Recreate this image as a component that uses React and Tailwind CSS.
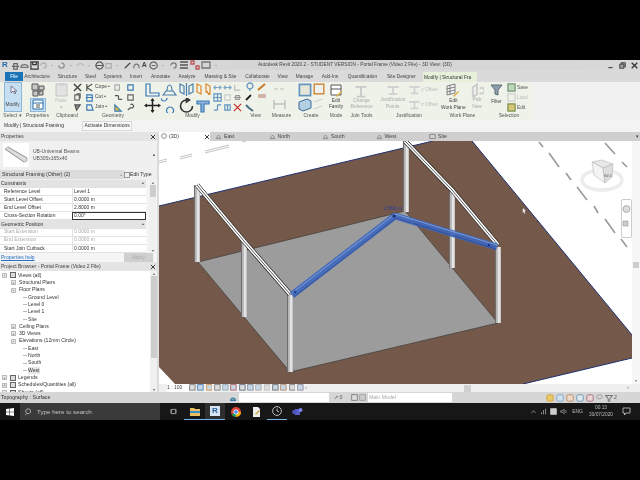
import React from "react";

const font = { fontFamily: '"Liberation Sans", Arial, sans-serif' };

const Box = ({ c = "#3a78b5", f = "none", s = 9, r = 0 }) => (
  <svg width={s} height={s} viewBox="0 0 10 10" className="shrink-0">
    <rect x="1" y="1" width="8" height="8" rx={r} fill={f} stroke={c} strokeWidth="1.2" />
  </svg>
);
const P = ({ d, c = "#444", f = "none", s = 9, w = 1.3 }) => (
  <svg width={s} height={s} viewBox="0 0 10 10" className="shrink-0">
    <path d={d} stroke={c} fill={f} strokeWidth={w} />
  </svg>
);

const Big = ({ d, c = "#3a78b5", f = "none", w = 1.2 }) => (
  <svg width="17" height="15" viewBox="0 0 17 15" className="shrink-0">
    <path d={d} stroke={c} fill={f} strokeWidth={w} />
  </svg>
);

function Qat() {
  const items = [
    ["M1 6h8M3 3h4v6H3z", "#666"],
    ["M1 7c0-4 8-4 8 0z", "#777"],
    ["M1 1h8v8H1zM3 1v3h4V1", "#333"],
    ["M2 5a3 3 0 1 1 3 3", "#aaa"],
    ["M4 5h1", "#888"],
    ["M2 5a3 3 0 1 0 3-3", "#888"],
    ["M4 5h1", "#888"],
    ["M1 5c3-3 5-3 8 0", "#bbb"],
    ["M4 5h1", "#888"],
    ["M1 5h8M5 1a4 4 0 1 0 .1 0", "#555"],
    ["M2 3h6v5H2z", "#aaa"],
    ["M4 5h1", "#888"],
    ["M2 8L8 2", "#333"],
    ["M2 8c0-6 6-6 6 0", "#777"],
  ];
  return (
    <div className="flex h-[10px] items-center bg-gradient-to-r from-[#d9d9d9] via-[#d4d4d4] to-[#d8d8d8] pl-[2px] text-[6px] text-[#333]">
      <span className="w-[9px] text-[8px] font-bold text-[#2b6aa8]">R</span>
      <div className="flex items-center gap-[0.3px]">
        {items.map(([d, c], i) => (
          <P key={i} d={d} c={c} s={9} />
        ))}
      </div>
      <span className="ml-[1px] text-[7px] font-bold text-[#444]">A</span>
      <div className="ml-[2px] flex items-center gap-[1px]">
        <P d="M5 1a4 4 0 1 0 .1 0M3 5h4" c="#666" />
        <P d="M4 5h1" c="#888" />
        <P d="M2 5a3 3 0 1 1 3 3" c="#777" />
        <P d="M1 2h8M1 5h8M1 8h8" c="#555" s={10} />
        <P d="M1 1h3v3H1zM6 6h3v3H6z" c="#b55" s={10} />
        <P d="M1 2h8v6H1z" c="#777" s={10} />
        <P d="M4 5h1" c="#888" />
      </div>
      <span className="ml-[37px] w-[196px] whitespace-nowrap text-[4.8px] text-[#444]">
        Autodesk Revit 2020.2 - STUDENT VERSION - Portal Frame (Video 2 File) - 3D View: {"{3D}"}
      </span>
      <div className="ml-auto flex items-center gap-[5px] pr-[2px]">
        <P d="M2 8h6" c="#444" w={1.6} s={7} />
        <P d="M1 3h6v6H1zM3 3V1h6v6H7" c="#444" f="#999" s={7} />
        <P d="M1 1l8 8M9 1l-8 8" c="#333" w={1.8} s={7} />
      </div>
    </div>
  );
}

function MenuTabs() {
  const t = [
    ["Architecture", 26], ["Structure", 20], ["Steel", 11], ["Systems", 18], ["Insert", 14],
    ["Annotate", 20], ["Analyze", 18], ["Massing & Site", 34], ["Collaborate", 25],
    ["View", 10], ["Manage", 19], ["Add-Ins", 17], ["Quantification", 33], ["Site Designer", 30],
  ];
  return (
    <div className="flex h-[12px] items-end bg-[#dadada] text-[4.8px] text-[#444]">
      <div className="mb-[1px] ml-[5px] flex h-[9px] w-[18px] items-center justify-center bg-[#1b74b8] text-white">File</div>
      <div className="mb-[2px] -ml-[6.5px] flex">
        {t.map(([n, w]) => (
          <span key={n} style={{ width: w }} className="ml-[7.5px] shrink-0 whitespace-nowrap text-center">{n}</span>
        ))}
      </div>
      <div className="ml-[6.5px] h-[10px] w-[54px] overflow-hidden whitespace-nowrap bg-[#e6f0db] pl-[1px] pt-[2px] text-[#333]">Modify | Structural Fra</div>
    </div>
  );
}

const Panel = ({ w, label, children, cls = "", labelCls = "" }) => (
  <div style={{ width: w }} className="flex shrink-0 flex-col">
    <div className={"flex h-[30px] items-center justify-center " + cls}>{children}</div>
    <div className={"flex h-[8px] items-center justify-center whitespace-nowrap text-[5px] text-[#555] " + labelCls}>{label}</div>
  </div>
);
const Two = ({ a, b, gray }) => (
  <div className={"text-center text-[4.8px] leading-[6.5px] " + (gray ? "text-[#aaa]" : "text-[#444]")}>
    <div>{a}</div>
    <div>{b}</div>
  </div>
);

function Ribbon() {
  const geom = [
    [<P d="M1 1l8 8M9 1l-8 8" c="#444" w={1.6} />, <P d="M2 1v8M2 5l6-4M2 5l6 4" c="#555" />, "Cope", <P d="M1 2h5v6H1z" c="#aaa" />, <P d="M2 2h6v6H2z" c="#3a78b5" />],
    [<P d="M2 2h5v6H2zM4 1h4v5" c="#666" />, <P d="M2 2h6v7H2zM1 5h8" c="#3a78b5" />, "Cut", <P d="M1 3h4M5 7h4M5 3v4" c="#555" />, <P d="M2 2h6v6H2z" c="#666" />],
    [<P d="M2 2h6l-4 6z" c="#555" f="#888" />, <P d="M2 2h5l2 6H2z" c="#3a78b5" />, "Join", <P d="M1 9V2l7 7z" c="#3a78b5" f="#e0c040" />, <P d="M2 8l3-3M5 2a2 2 0 1 1 .1 3" c="#555" />],
  ];
  const small = [
    [["M1 5h8M3 3l-2 2 2 2M7 3l2 2-2 2", "#7fa6c8"], ["M1 5h8M3 3l-2 2 2 2M7 3l2 2-2 2", "#7fa6c8"], ["M2 2v6h6", "#bbb"]],
    [["M1 1h8v8H1zM5 1v8M1 5h8", "#5f93c0"], ["M2 2h6v6H2z", "#ccc"], ["M1 5h8M3 3h4v4H3z", "#999"]],
    [["M1 8h4M5 2v6M5 2h4", "#5f93c0"], ["M2 2h6v6H2zM5 2v6", "#5f93c0"], ["M1 1l8 8M9 1l-8 8", "#c62828"]],
  ];
  return (
    <div className="flex h-[38px] bg-[#f1f1f1]">
      <div className="flex w-[533px] shrink-0 bg-[#eef2e8]">
        <Panel w={25} label="Select ▾">
          <div className="flex h-[30px] w-[18px] flex-col items-center border border-[#8db5d8] bg-[#c6dff2] pt-[2px] text-[4.8px] text-[#444]">
            <P d="M3 1v7l2-2 2 3 1-1-2-2h3z" c="#667" f="#eef" s={10} w={0.8} />
            <span className="mt-[6px]">Modify</span>
          </div>
        </Panel>
        <Panel w={25} label="Properties">
          <div className="flex flex-col items-center gap-[1px]">
            <svg width="14" height="14" viewBox="0 0 14 14"><path d="M1 1h6v6H1zM8 3h5v4H8zM2 8h5v5H2zM8 8h4v4H8z" fill="#c9c9c9" stroke="#555" /><circle cx="8" cy="8" r="2" fill="#777" /></svg>
            <div className="flex h-[14px] w-[16px] items-center justify-center border border-[#8db5d8] bg-[#c6dff2]">
              <svg width="12" height="11" viewBox="0 0 12 11"><path d="M1 1h10v9H1zM1 4h10" fill="#fff" stroke="#2a6ca8" /><path d="M4 6h4M4 8h4" stroke="#555" /></svg>
            </div>
          </div>
        </Panel>
        <Panel w={22} label="Clipboard" labelCls="ml-[12px]">
          <div className="flex flex-col items-center text-[4.5px] text-[#bbb]">
            <svg width="13" height="15" viewBox="0 0 13 15"><path d="M1 2h11v12H1z" fill="#e2e2e2" stroke="#c4c4c4" /><path d="M4 1h5v3H4z" fill="#d2d2d2" /></svg>
            <span className="mt-[1px]">Paste</span>
            <span>▾</span>
          </div>
        </Panel>
        <Panel w={70} label="Geometry" labelCls="ml-[12px]" cls="justify-start pl-[1px]">
          <div className="flex flex-col">
            {geom.map((r, i) => (
              <div key={i} className="flex h-[10px] items-center gap-[1px] text-[5px] text-[#444]">
                {r[0]}
                <span className="w-[1px]" />
                {r[1]}
                <span className="w-[18px] whitespace-nowrap">{r[2]} ▪</span>
                {r[3]}
                <span className="w-[1px]" />
                {r[4]}
              </div>
            ))}
          </div>
        </Panel>
        <Panel w={101} label="Modify">
          <div className="grid grid-cols-[17px_17px_17px_17px] gap-y-[1px]">
            <Big d="M2 2h4v9h9v3H2z" />
            <Big d="M2 13l3-4h7l3 4zM6 9c0-8 5-8 5 0" c="#4a7fae" />
            <Big d="M2 2l4 2v8l-4-2zM15 2l-4 2v8l4-2zM8.5 1v13" c="#4a7fae" />
            <Big d="M2 2l4 2v8l-4-2zM11 2l4 2v8l-4-2zM14 13l-2-4" c="#e0892c" />
            <svg width="17" height="15" viewBox="0 0 17 15"><path d="M8.5 1v13M2 7.5h13" stroke="#222" strokeWidth="1.5" /><path d="M8.5 0l-2 3h4zM8.5 15l-2-3h4zM0 7.5l3-2v4zM17 7.5l-3-2v4z" fill="#222" /></svg>
            <Big d="M3 3a3 3 0 1 1 .1 0M9 9a3.5 3.5 0 1 0 .1 0" c="#3a78b5" />
            <Big d="M8.5 2a6 6 0 1 0 6 6M8.5 0v4l3-2z" c="#333" w={1.6} />
            <Big d="M2 3h12v3H9v8H6V6H2z" c="#3a78b5" f="#8fb6d8" />
          </div>
          <div className="ml-[1px] flex flex-col">
            {small.map((r, i) => (
              <div key={i} className="flex h-[10px] items-center gap-[1px]">
                {r.map(([d, c], j) => (
                  <P key={j} d={d} c={c} />
                ))}
              </div>
            ))}
          </div>
        </Panel>
        <Panel w={25} label="View">
          <div className="grid grid-cols-[12px_10px] grid-rows-[10px_10px_10px]">
            <P d="M5 1a3 3 0 1 1-.1 0M5 7v2" c="#5f93c0" s={10} />
            <P d="M1 8l7-6" c="#c87a2a" w={2} s={10} />
            <P d="M1 8l5-5" c="#222" w={1.8} s={10} />
            <P d="M2 3h6v2H2z" c="#c9a090" s={10} />
            <P d="M1 3l3 3 4 3" c="#4a6d80" w={2} s={10} />
          </div>
        </Panel>
        <Panel w={27} label="Measure">
          <div className="flex flex-col gap-[5px]">
            <svg width="18" height="9" viewBox="0 0 18 9"><path d="M1 4h4M7 4h4" stroke="#bbb" /></svg>
            <svg width="18" height="11" viewBox="0 0 18 11"><path d="M1 1v9M12 1v9M1 5h11" stroke="#aaa" /></svg>
          </div>
        </Panel>
        <Panel w={32} label="Create">
          <div className="flex flex-col gap-[1px]">
            <div className="flex gap-[1px]">
              <Box c="#5f93c0" f="#e6e6d8" s={14} />
              <Box c="#d08a3a" f="#f0f0f0" s={12} />
            </div>
            <div className="flex gap-[1px]">
              <svg width="14" height="14" viewBox="0 0 14 14"><path d="M1 4l8-3 4 2v7l-8 3-4-2z" fill="#b5cfe2" stroke="#3a6f9c" /></svg>
              <svg width="12" height="14" viewBox="0 0 12 14"><path d="M1 4l8-3M1 11l8-3" stroke="#ccc" /></svg>
            </div>
          </div>
        </Panel>
        <Panel w={18} label="Mode">
          <div className="flex flex-col items-center">
            <svg width="13" height="14" viewBox="0 0 13 14"><path d="M1 1h10v10H1zM1 5h10" stroke="#555" fill="#fff" /><path d="M6 12l5-5 1 1-5 5z" fill="#e2b040" /></svg>
            <Two a="Edit" b="Family" />
          </div>
        </Panel>
        <Panel w={33} label="Join Tools">
          <div className="flex flex-col items-center">
            <P d="M1 2h8M5 2v7M2 9h6" c="#c9c9c9" s={14} />
            <Two a="Change" b="Reference" gray />
          </div>
        </Panel>
        <Panel w={62} label="Justification">
          <div className="flex gap-[3px]">
            <div className="flex flex-col items-center">
              <P d="M1 3h8M5 3v5M2 8h6" c="#d0d0d0" s={14} />
              <Two a="Justification" b="Points" gray />
            </div>
            <div className="flex flex-col gap-[2px] text-[4.8px] text-[#bbb]">
              <div className="flex items-center"><P d="M1 3h8M5 3v5M2 8h6" c="#d0d0d0" s={13} /><span>y Offset</span></div>
              <div className="flex items-center"><P d="M1 3h8M5 3v5M2 8h6" c="#d0d0d0" s={13} /><span>z Offset</span></div>
            </div>
          </div>
        </Panel>
        <Panel w={45} label="Work Plane">
          <div className="flex flex-1 justify-between px-[1px]">
            <div className="flex flex-col items-center">
              <svg width="14" height="15" viewBox="0 0 14 15"><path d="M1 3l8-2v9l-8 2zM4 2.5v9M1 6l8-2M1 9l8-2" stroke="#666" fill="#f4f4f4" strokeWidth=".8" /><path d="M7 13l5-5 1 1-5 5z" fill="#e2b040" /></svg>
              <Two a="Edit" b="Work Plane" />
            </div>
            <div className="flex flex-col items-center">
              <P d="M2 3l3-2v7l-3 2zM7 4a2 2 0 1 1 0 3" c="#ccc" s={14} />
              <Two a="Pick" b="New" gray />
            </div>
          </div>
        </Panel>
        <Panel w={48} label="Selection">
          <div className="flex gap-[4px]">
            <div className="flex flex-col items-center text-[4.8px] text-[#444]">
              <svg width="13" height="13" viewBox="0 0 13 13"><path d="M1 2h11L8 7v5l-3-1V7z" fill="#8fa0ad" stroke="#5c6c78" /></svg>
              <span className="mt-[2px]">Filter</span>
            </div>
            <div className="flex flex-col gap-[1px] text-[4.8px] leading-[9px] text-[#555]">
              <div className="flex items-center gap-[1px]"><Box c="#6a8a6a" f="#bcd7bc" s={9} />Save</div>
              <div className="flex items-center gap-[1px] text-[#bbb]"><Box c="#ccc" s={9} />Load</div>
              <div className="flex items-center gap-[1px]"><Box c="#6a8a3a" f="#d7c77c" s={9} />Edit</div>
            </div>
          </div>
        </Panel>
      </div>
    </div>
  );
}

function Options() {
  return (
    <div className="flex h-[12px] items-center bg-[#f3f3f3] text-[5px] text-[#333]">
      <span className="ml-[4px] w-[78px] whitespace-nowrap">Modify | Structural Framing</span>
      <span className="flex h-[10px] items-center border border-[#d8d8d8] bg-[#f8f8f8] px-[1.5px]">Activate Dimensions</span>
    </div>
  );
}

const X = ({ s = 6 }) => <P d="M1.5 1.5l7 7M8.5 1.5l-7 7" c="#333" w={1.6} s={s} />;

function Properties() {
  const R = ({ a, b, g, sel }) => (
    <div className={"flex h-[8.1px] items-center border-b border-[#e2e2e2] text-[5px] " + (g ? "text-[#aaa]" : "text-[#333]")}>
      <span className="w-[72px] shrink-0 whitespace-nowrap pl-[4px]">{a}</span>
      <span className={"flex h-[8.1px] flex-1 items-center pl-[1px] " + (sel ? "border border-[#333]" : "border-l border-[#e2e2e2]")}>{b}</span>
    </div>
  );
  const H = ({ t }) => (
    <div className="flex h-[8.1px] items-center justify-between bg-[#e3e3e3] pl-[1px] pr-[2px] text-[5px] text-[#333]">
      {t}<span className="text-[5px] font-bold">▪</span>
    </div>
  );
  return (
    <div className="flex h-[130px] flex-col bg-[#f5f5f5]">
      <div className="flex h-[9px] items-center justify-between bg-[#e4e4e4] pl-[1px] pr-[1px] text-[5px] text-[#444]">
        Properties<X />
      </div>
      <div className="flex h-[28px] items-center bg-[#f0f0f0] pl-[3px] pr-[2px] text-[5px] text-[#555]">
        <div className="flex h-[24px] w-[26px] items-center justify-center bg-white">
          <svg width="24" height="22" viewBox="0 0 24 22"><path d="M1 5l3-2 19 11v3l-3 1z" fill="#ddd" stroke="#999" strokeWidth=".7" /><path d="M1 5l19 13M4 3l19 11" stroke="#888" strokeWidth=".6" /></svg>
        </div>
        <div className="ml-[4px] leading-[7px]">
          <div>UB-Universal Beams</div>
          <div>UB305x165x40</div>
        </div>
        <span className="ml-auto text-[6px] text-[#333]">▪</span>
      </div>
      <div className="flex h-[11px] items-center bg-[#efefef] text-[5.2px] text-[#333]">
        <div className="flex h-[9px] w-[124px] items-center justify-between bg-[#dcdcdc] pl-[2px] pr-[1px]">
          Structural Framing (Other) (2)<span className="text-[#777]">⌄</span>
        </div>
        <Box c="#777" s={6} />
        <span className="whitespace-nowrap">Edit Type</span>
      </div>
      <div className="flex">
        <div className="w-[146px] shrink-0 bg-white">
          <H t="Constraints" />
          <R a="Reference Level" b="Level 1" />
          <R a="Start Level Offset" b="0.0000 m" />
          <R a="End Level Offset" b="2.8000 m" />
          <R a="Cross-Section Rotation" b="0.00°" sel />
          <H t="Geometric Position" />
          <R a="Start Extension" b="0.0000 m" g />
          <R a="End Extension" b="0.0000 m" g />
          <R a="Start Join Cutback" b="0.0000 m" />
        </div>
        <div className="ml-[3px] flex w-[7px] flex-col items-center bg-[#f0f0f0]">
          <span className="h-[5px] text-[4px] leading-[5px] text-[#666]">▴</span>
          <div className="h-[12px] w-[6px] bg-[#cdcdcd]" />
          <span className="mt-auto h-[5px] text-[4px] leading-[5px] text-[#666]">▾</span>
        </div>
      </div>
      <div className="flex h-[9.1px] items-center justify-between pl-[1px] pr-[4px] text-[5px]">
        <span className="text-[#2b6fc2] underline">Properties help</span>
        <span className="flex h-[9px] w-[29px] items-center justify-center bg-[#cfcfcf] text-[#aaa]">Apply</span>
      </div>
    </div>
  );
}

function Tree() {
  const rows = [
    [0, "Views (all)", "-", 1], [1, "Structural Plans", "+"], [1, "Floor Plans", "-"], [2, "Ground Level"], [2, "Level 0"], [2, "Level 1"], [2, "Site"],
    [1, "Ceiling Plans", "+"], [1, "3D Views", "+"], [1, "Elevations (12mm Circle)", "-"], [2, "East"], [2, "North"], [2, "South"], [2, "West", null, 0, 1],
    [0, "Legends", "+", 2], [0, "Schedules/Quantities (all)", "+", 2], [0, "Sheets (all)", "+", 2],
  ];
  return (
    <div className="flex h-[130px] flex-col overflow-hidden bg-white">
      <div className="flex h-[9px] shrink-0 items-center justify-between bg-[#e4e4e4] pl-[1px] pr-[1px] text-[5px] text-[#444]">
        Project Browser - Portal Frame (Video 2 File)<X />
      </div>
      <div className="flex min-h-0 flex-1">
        <div className="flex-1 overflow-hidden pt-[0.7px]">
          {rows.map(([lv, t, sign, ic, sel]) => (
            <div key={t} className="flex h-[7.33px] items-center text-[5.1px] text-[#333]">
              {lv === 2 ? (
                <span className="ml-[23px] mr-[1px] h-[1px] w-[4px] bg-[#bbb]" />
              ) : (
                <span style={{ marginLeft: lv === 0 ? 2 : 11, marginRight: lv === 0 ? 3 : 3 }} className="flex h-[5px] w-[5px] items-center justify-center border border-[#bbb] bg-[#e8e8e8] text-[4px] leading-none">
                  {sign}
                </span>
              )}
              {ic ? <span className="mr-[2px] h-[6px] w-[6px] shrink-0 border border-[#666] bg-[#ddd]" /> : null}
              <span className={"whitespace-nowrap " + (sel ? "bg-[#e6e6e6]" : "")}>{t}</span>
            </div>
          ))}
        </div>
        <div className="flex w-[7px] flex-col items-center bg-[#f0f0f0]">
          <span className="h-[5px] text-[4px] leading-[5px] text-[#666]">▴</span>
          <div className="h-[82px] w-[6px] bg-[#cdcdcd]" />
          <span className="mt-auto h-[5px] text-[4px] leading-[5px] text-[#666]">▾</span>
        </div>
      </div>
    </div>
  );
}

const Column = ({ x, y1, y2 }) => (
  <g>
    <rect x={x} y={y1} width="6" height={y2 - y1} fill="#e4e4e4" />
    <rect x={x} y={y1} width="1.4" height={y2 - y1} fill="#6e6e6e" />
    <rect x={x + 1.4} y={y1} width="1.4" height={y2 - y1} fill="#b5b5b5" />
    <rect x={x + 5} y={y1} width="1" height={y2 - y1} fill="#c5c5c5" />
  </g>
);
const Beam = ({ d }) => (
  <g fill="none">
    <path d={d} stroke="#222" strokeWidth="5" />
    <path d={d} stroke="#fff" strokeWidth="3.6" />
    <path d={d} stroke="#444" strokeWidth=".9" />
  </g>
);
const dashes = [
  "M539 142l4 5", "M549 153l10 14", "M566 173l5 7", "M577 187l10 13", "M594 206l4 7", "M605 219l10 14", "M621 239l6 8",
  "M605 143l10 11", "M622 162l5 5",
];

function Scene() {
  return (
    <svg width="473" height="243" viewBox="159 141 473 243" className="block shrink-0 bg-white">
      <g stroke="#999" strokeWidth="1.6" fill="none">
        {dashes.map((d) => <path key={d} d={d} />)}
      </g>
      <g stroke="#aaa" strokeWidth=".7" fill="none">
        <path d="M159 161l8-2M159 163l8-2M180 157l12-3M180 159l12-3M205 151l24-6M205 153l24-6M242 142l4-1" />
      </g>
      <path d="M159 206L433 141H472L632 335V358L523 384H175L159 367Z" fill="#74594a" />
      <path d="M159 206L433 141M472 141L632 335M632 358L523 384" stroke="#1f2f70" strokeWidth="1" fill="none" />
      <path d="M198 262L405 211L498 323L290 372Z" fill="#9c9c9c" />
      <path d="M198 262L290 372L498 323M198 262L405 211L498 323" stroke="#3c3c3c" strokeWidth=".7" fill="none" />
      <Column x={194} y1={185} y2={262} />
      <Column x={241} y1={240} y2={317} />
      <Column x={287} y1={295} y2={372} />
      <Column x={403} y1={141} y2={212} />
      <Column x={449} y1={190} y2={268} />
      <Column x={495} y1={247} y2={323} />
      <Beam d="M197 185L243 240L290 294" />
      <Beam d="M405 141L452 190L498 245" />
      <g opacity=".92" fill="none">
        <path d="M292 295L395 216L497 247" stroke="#3f68bd" strokeWidth="7" strokeLinejoin="bevel" />
        <path d="M292 293L395 214L497 245" stroke="#7f9fdd" strokeWidth="1" />
        <path d="M294 297L396 218L496 249" stroke="#2d4f9f" strokeWidth="1" />
      </g>
      <circle cx="295" cy="292" r="1.3" fill="#1d3a8a" />
      <circle cx="394" cy="216" r="1.5" fill="#14286e" />
      <circle cx="489" cy="245" r="1.3" fill="#1d3a8a" />
      <text x="384" y="209.5" fontSize="5" fill="#2a3f9f">2.800 m</text>
      <path d="M523 208l3 3-1.5.3.8 2-1 .4-.8-2-1 1z" fill="#eee" />
      <ellipse cx="602" cy="180" rx="20" ry="10" fill="none" stroke="#ececec" strokeWidth="3.5" />
      <path d="M592 162L602 160L613 164L603 168Z" fill="#e8e8e8" stroke="#aaa" strokeWidth=".5" />
      <path d="M592 162L603 168L605 183L594 175Z" fill="#f4f4f4" stroke="#aaa" strokeWidth=".5" />
      <path d="M603 168L613 164L612 177L605 183Z" fill="#dedede" stroke="#aaa" strokeWidth=".5" />
      <text x="604" y="177" fontSize="3" fill="#777">BACK</text>
      <rect x="621.5" y="199.5" width="10" height="38" rx="1.5" fill="#fff" stroke="#ccc" />
      <circle cx="626.5" cy="209" r="3.4" fill="#ddd" stroke="#aaa" />
      <path d="M623 221h5v5h-5z" fill="#ccc" stroke="#999" strokeWidth=".6" />
    </svg>
  );
}

function ViewArea() {
  const tabs = ["East", "North", "South", "West", "Site"];
  const icons = ["#777", "#3a78b5", "#d08a3a", "#777", "#8aa", "#a55", "#567", "#789", "#aaa", "#bbb", "#666", "#a86", "#777", "#889"];
  return (
    <div className="flex min-w-0 flex-1 flex-col">
      <div className="flex h-[9px] shrink-0 items-center bg-[#cfcfcf] text-[5.2px] text-[#444]">
        <div className="flex h-[9px] w-[51px] items-center justify-between bg-white pl-[2px] pr-[0.5px]">
          <span className="flex items-center gap-[2px]"><Box c="#666" s={6} r={4} />(3D)</span>
          <X />
        </div>
        {tabs.map((t, i) => (
          <div key={t} className="flex w-[53.5px] shrink-0 items-center gap-[2px] pl-[5px]">
            <P d={i === 4 ? "M1 2h8v6H1z" : "M1 8h8M3 8V5l2-2 2 2v3"} c="#888" s={7} />
            {t}
          </div>
        ))}
        <span className="ml-auto pr-[1px] text-[5px] text-[#444]">▾</span>
      </div>
      <div className="flex h-[243px] shrink-0 bg-white">
        <Scene />
        <div className="flex w-[8px] flex-col items-center bg-[#f6f6f6]">
          <div className="mt-[121px] h-[6px] w-[6px] bg-[#cdcdcd]" />
          <span className="mt-auto text-[4px] text-[#777]">▾</span>
        </div>
      </div>
      <div className="flex h-[8px] shrink-0 items-center bg-[#efefef] text-[5px] text-[#444]">
        <span className="ml-[8px] w-[22px] bg-white whitespace-nowrap">1 : 100</span>
        <div className="flex w-[120px] gap-[1.5px] bg-[#f2f2f2]">
          {icons.map((c, i) => (
            <Box key={i} c={c} f={i % 3 === 0 ? "#ddd" : "#c9d6e4"} s={6.8} />
          ))}
          <span className="text-[#666]">‹</span>
        </div>
        <div className="ml-[155px] h-[7px] w-[7px] bg-[#cfcfcf]" />
        <span className="ml-auto pr-[11px] text-[#555]">›</span>
      </div>
    </div>
  );
}

function Status() {
  const tray = [
    ["#d8a838", "#e6c868"], ["#7ea6c8", "#d4e2ee"], ["#c08a60", "#eadccc"], ["#6a98b8", "#deeaee"], ["#a87080", "#eed6d6"],
  ];
  return (
    <div className="flex h-[11px] items-center bg-[#d6d6d6] text-[5.2px] text-[#333]">
      <span className="ml-[1px] w-[228px] whitespace-nowrap">Topography : Surface</span>
      <P d="M2 8a3 3 0 1 1 6 0z" c="#3a78b5" f="#7a9" s={8} />
      <div className="ml-[2px] h-[9px] w-[90px] bg-white" />
      <span className="ml-[5px] w-[17px] text-[#555]">↗ 0</span>
      <Box c="#777" f="#ddd" s={7} />
      <span className="w-[1px]" />
      <Box c="#999" f="#ccc" s={7} />
      <div className="ml-[2px] flex h-[9px] w-[84px] items-center bg-white pl-[1px] text-[#aaa]">Main Model</div>
      <div className="ml-[94px] flex items-center gap-[2px]">
        {tray.map(([c, f], i) => (
          <Box key={i} c={c} f={f} s={8} r={2} />
        ))}
        <P d="M5 1a4 3 0 1 1-.1 0" c="#999" s={7} />
        <P d="M1 2h8L6 6v3H4V6z" c="#777" s={8} />
        <span className="-ml-[1px] text-[#555]">2</span>
      </div>
    </div>
  );
}

function Taskbar() {
  return (
    <div className="flex h-[17px] items-center bg-[#171717] text-[#ccc]">
      <div className="flex h-[17px] w-[20px] items-center justify-center">
        <svg width="8" height="8" viewBox="0 0 8 8"><path d="M0 1l3.5-.5V3.7H0zM4 .4L8 0v3.7H4zM0 4.2h3.5v3.3L0 7zM4 4.2h4V8l-4-.5z" fill="#fff" /></svg>
      </div>
      <div className="flex h-[17px] w-[140px] items-center bg-[#3a3a3a] pl-[5px] text-[6.2px] text-[#c4c4c4]">
        <P d="M4 1a3 3 0 1 1-.1 0M2 7l-1.5 2" c="#ccc" w={1} s={8} />
        <span className="ml-[4px] whitespace-nowrap">Type here to search</span>
      </div>
      <div className="ml-[8px] flex items-center">
        <div className="flex h-[17px] w-[10px] items-center justify-center">
          <P d="M2 2h6v6H2zM0 2v6M10 2v6" c="#aaa" s={7} />
        </div>
        <div className="ml-[6px] flex h-[17px] w-[21px] items-center justify-center border-b border-[#7ab4e0]">
          <svg width="10" height="9" viewBox="0 0 10 9"><path d="M0 1h4l1 1h5v7H0z" fill="#e8c060" /><path d="M0 4h10v2H0z" fill="#3a8ec8" /></svg>
        </div>
        <div className="flex h-[17px] w-[20px] items-center justify-center border-b border-[#7ab4e0] bg-[#2f2f2f]">
          <div className="flex h-[10px] w-[10px] items-center justify-center bg-[#d6e4f2] text-[8px] font-bold text-[#2660a0]">R</div>
        </div>
        <div className="flex h-[17px] w-[21px] items-center justify-center">
          <svg width="10" height="10" viewBox="0 0 10 10"><circle cx="5" cy="5" r="5" fill="#db4437" /><path d="M5 5L.7 7.5A5 5 0 0 0 5 10z" fill="#0f9d58" /><path d="M5 5l4.3 2.5A5 5 0 0 1 5 10zM5 5h5A5 5 0 0 1 7 9.5z" fill="#f4b400" /><circle cx="5" cy="5" r="2.2" fill="#4285f4" stroke="#fff" strokeWidth=".8" /></svg>
        </div>
        <div className="flex h-[17px] w-[21px] items-center justify-center">
          <svg width="9" height="10" viewBox="0 0 9 10"><path d="M1 0h5l2 2v8H1z" fill="#eee" /><path d="M3 7l4-4 1 1-4 4z" fill="#c9a93c" /></svg>
        </div>
        <div className="flex h-[17px] w-[20px] items-center justify-center border-b border-[#7ab4e0]">
          <svg width="10" height="10" viewBox="0 0 10 10"><circle cx="5" cy="5" r="4.4" fill="none" stroke="#bbb" /><path d="M5 2.5V5l2 1" stroke="#bbb" fill="none" /></svg>
        </div>
        <div className="flex h-[17px] w-[21px] items-center justify-center">
          <svg width="11" height="10" viewBox="0 0 11 10"><rect x="3" y="2" width="5" height="6" fill="#5b5fc7" /><circle cx="8.5" cy="3" r="2" fill="#7b83eb" /><circle cx="2.5" cy="5" r="2.3" fill="#4b53bc" /></svg>
        </div>
      </div>
      <div className="ml-auto flex items-center pr-[9px] text-[5px] text-[#bbb]">
        <P d="M2 7l3-3 3 3" c="#bbb" w={1} s={7} />
        <span className="w-[3px]" />
        <P d="M2 9V6M5 9V3M8 9V1" c="#999" s={7} />
        <span className="w-[3px]" />
        <Box c="#ccc" f="#ccc" s={7} />
        <span className="w-[3px]" />
        <P d="M1 4h2l3-2v6L3 6H1zM8 3c1 1 1 3 0 4" c="#bbb" w={.9} s={7} />
        <span className="ml-[5px]">ENG</span>
        <div className="ml-[5px] w-[26px] text-center text-[4.8px] leading-[6.5px]">
          <div>00:13</div>
          <div>30/07/2020</div>
        </div>
        <svg className="ml-[8px]" width="9" height="9" viewBox="0 0 9 9"><path d="M1 1h7v5H4L2.5 8V6H1z" fill="none" stroke="#ccc" strokeWidth=".8" /></svg>
      </div>
    </div>
  );
}

export default function App() {
  return (
    <div style={font} className="flex h-[480px] w-[640px] flex-col overflow-hidden bg-black blur-[0.45px]">
      <div className="h-[60px] shrink-0 bg-black" />
      <div className="flex h-[343px] shrink-0 flex-col bg-[#f0f0f0]">
        <Qat />
        <MenuTabs />
        <Ribbon />
        <Options />
        <div className="flex h-[260px]">
          <div className="flex w-[159px] shrink-0 flex-col border-r-[2px] border-[#dcdcdc]">
            <Properties />
            <Tree />
          </div>
          <ViewArea />
        </div>
        <Status />
      </div>
      <Taskbar />
    </div>
  );
}
